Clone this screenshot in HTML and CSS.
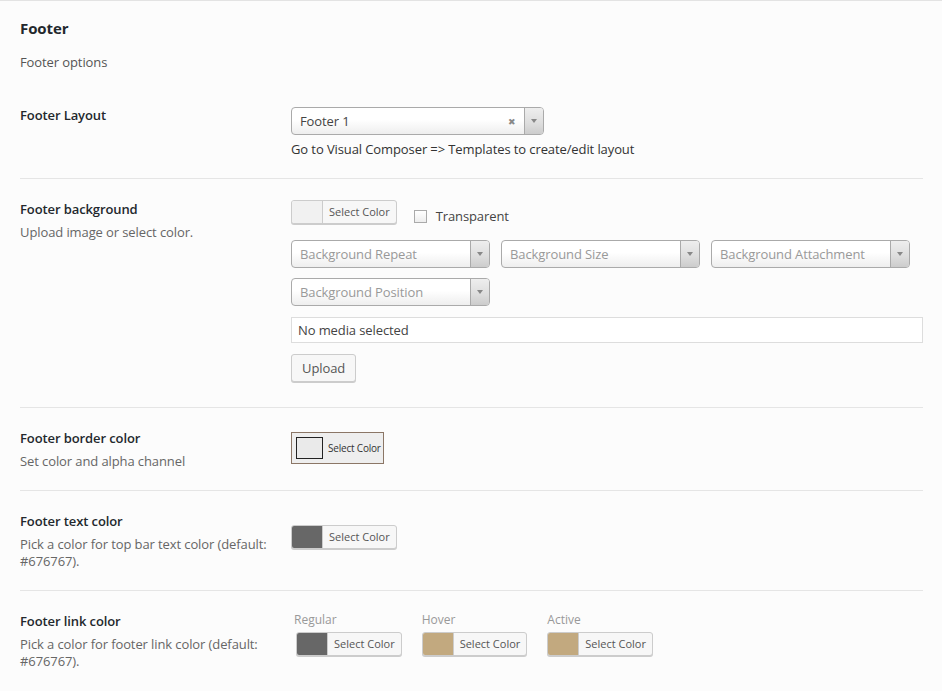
FILE: index.html
```html
<!DOCTYPE html>
<html>
<head>
<meta charset="utf-8">
<link rel="stylesheet" href="styles.css">
</head>
<body>
<div class="page">
  <div class="section-head">
    <h2 class="title">Footer</h2>
    <p class="subtitle">Footer options</p>
  </div>

  <div class="row">
    <div class="label-col">
      <div class="label">Footer Layout</div>
    </div>
    <div class="field-col field-layout">
      <div class="select select-main">
        <span class="select-text">Footer 1</span>
        <span class="select-clear">&#x2716;</span>
        <span class="select-arrow"><span class="tri"></span></span>
      </div>
      <div class="hint">Go to Visual Composer =&gt; Templates to create/edit layout</div>
    </div>
  </div>

  <div class="row">
    <div class="label-col">
      <div class="label">Footer background</div>
      <div class="desc">Upload image or select color.</div>
    </div>
    <div class="field-col field-bg">
      <div class="line-color">
        <div class="color-btn"><span class="swatch sw-light"></span><span class="color-text">Select Color</span></div>
        <label class="check"><span class="box"></span><span>Transparent</span></label>
      </div>
      <div class="selects">
        <div class="select select-ph"><span class="select-text">Background Repeat</span><span class="select-arrow"><span class="tri"></span></span></div>
        <div class="select select-ph"><span class="select-text">Background Size</span><span class="select-arrow"><span class="tri"></span></span></div>
        <div class="select select-ph"><span class="select-text">Background Attachment</span><span class="select-arrow"><span class="tri"></span></span></div>
        <div class="select select-ph"><span class="select-text">Background Position</span><span class="select-arrow"><span class="tri"></span></span></div>
      </div>
      <div class="media-input">No media selected</div>
      <div class="upload-btn">Upload</div>
    </div>
  </div>

  <div class="row">
    <div class="label-col">
      <div class="label">Footer border color</div>
      <div class="desc">Set color and alpha channel</div>
    </div>
    <div class="field-col field-border">
      <div class="alpha-btn"><span class="alpha-swatch"></span><span class="alpha-text">Select Color</span></div>
    </div>
  </div>

  <div class="row">
    <div class="label-col">
      <div class="label">Footer text color</div>
      <div class="desc">Pick a color for top bar text color (default: #676767).</div>
    </div>
    <div class="field-col field-text">
      <div class="color-btn"><span class="swatch sw-dark"></span><span class="color-text">Select Color</span></div>
    </div>
  </div>

  <div class="row row-last">
    <div class="label-col">
      <div class="label">Footer link color</div>
      <div class="desc">Pick a color for footer link color (default: #676767).</div>
    </div>
    <div class="field-col field-link">
      <div class="link-item">
        <div class="mini-label">Regular</div>
        <div class="color-btn"><span class="swatch sw-dark"></span><span class="color-text">Select Color</span></div>
      </div>
      <div class="link-item">
        <div class="mini-label">Hover</div>
        <div class="color-btn"><span class="swatch sw-tan"></span><span class="color-text">Select Color</span></div>
      </div>
      <div class="link-item">
        <div class="mini-label">Active</div>
        <div class="color-btn"><span class="swatch sw-tan"></span><span class="color-text">Select Color</span></div>
      </div>
    </div>
  </div>
</div>
</body>
</html>
```
FILE: styles.css
```css
* { box-sizing: border-box; }
html, body { margin: 0; padding: 0; }
body {
  background: #fcfcfc;
  font-family: "Open Sans", "Noto Sans", sans-serif;
  font-size: 13px;
  color: #444;
  width: 942px;
  height: 691px;
  overflow: hidden;
  border-top: 1px solid #e3e3e3;
}
.page {
  padding: 0 19px 0 20px;
}
.section-head {
  padding-top: 17px;
  height: 84px;
}
.title {
  margin: 0;
  font-size: 15px;
  font-weight: 700;
  line-height: 20px;
  color: #23282d;
  letter-spacing: -0.1px;
}
.subtitle {
  margin: 16px 0 0;
  font-size: 13px;
  line-height: 17px;
  color: #555;
  letter-spacing: -0.1px;
}
.row {
  display: grid;
  grid-template-columns: 271px 1fr;
  padding: 20px 0;
  border-bottom: 1px solid #e5e5e5;
}
.row-last { border-bottom: none; }
.label {
  font-size: 13px;
  font-weight: 600;
  line-height: 21px;
  color: #23282d;
  letter-spacing: -0.1px;
}
.desc {
  margin-top: 4px;
  font-size: 13px;
  line-height: 17px;
  color: #666;
  padding-right: 4px;
  letter-spacing: -0.1px;
}
.field-col { min-width: 0; }

/* select2-like */
.select {
  position: relative;
  display: flex;
  align-items: center;
  height: 28px;
  border: 1px solid #aaa;
  border-radius: 4px;
  background: linear-gradient(to bottom, #ffffff 0%, #ffffff 45%, #eeeeee 100%);
  overflow: hidden;
}
.select-main { width: 253px; margin-top: 2px; }
.select-text {
  flex: 1;
  padding-left: 8px;
  font-size: 13px;
  color: #444;
  white-space: nowrap;
  letter-spacing: -0.1px;
}
.select-ph .select-text { color: #999; }
.select-clear {
  width: 14px;
  font-size: 9px;
  color: #888;
  margin-right: 5px;
  text-align: center;
}
.select-arrow {
  width: 19px;
  height: 100%;
  border-left: 1px solid #aaa;
  background: linear-gradient(to bottom, #eeeeee 0%, #dddddd 60%, #cccccc 100%);
  display: flex;
  align-items: center;
  justify-content: center;
}
.tri {
  width: 0;
  height: 0;
  border-left: 3px solid transparent;
  border-right: 3px solid transparent;
  border-top: 4px solid #888;
}
.hint {
  margin-top: 6px;
  font-size: 13px;
  line-height: 17px;
  color: #333;
  letter-spacing: -0.1px;
}

/* background field */
.field-bg { padding-top: 1px; }
.line-color {
  display: flex;
  align-items: flex-start;
  gap: 17px;
  height: 24px;
}
.selects {
  display: grid;
  grid-template-columns: repeat(3, 199px);
  column-gap: 11px;
  row-gap: 10px;
  margin-top: 16px;
}
.media-input {
  margin-top: 11px;
  height: 26px;
  border: 1px solid #ddd;
  background: #fff;
  padding: 0 6px;
  font-size: 13px;
  line-height: 24px;
  color: #444;
  letter-spacing: -0.1px;
}
.upload-btn {
  display: inline-block;
  margin-top: 11px;
  margin-bottom: 5px;
  height: 28px;
  padding: 0 10px;
  border: 1px solid #ccc;
  border-radius: 3px;
  background: #f7f7f7;
  box-shadow: 0 1px 0 #ccc;
  font-size: 13px;
  line-height: 26px;
  color: #555;
  letter-spacing: -0.1px;
}

/* wp color button */
.color-btn {
  display: inline-flex;
  height: 24px;
  border: 1px solid #ccc;
  border-radius: 3px;
  background: #f7f7f7;
  box-shadow: 0 1px 0 #ccc;
  overflow: hidden;
}
.swatch {
  width: 31px;
  height: 100%;
  border-right: 1px solid #ccc;
}
.sw-light { background: #f1f1f1; }
.sw-dark { background: #676767; }
.sw-tan { background: #c2a97f; }
.color-text {
  padding: 0 6px;
  font-size: 11px;
  line-height: 22px;
  color: #555;
}
.check {
  display: flex;
  align-items: center;
  gap: 9px;
  font-size: 13px;
  line-height: 17px;
  color: #444;
  margin-top: 8px;
  letter-spacing: -0.1px;
}
.box {
  width: 13px;
  height: 13px;
  border: 1px solid #aaa;
  background: linear-gradient(to bottom, #fff, #ededed);
}

/* alpha color */
.field-border { padding-top: 4px; }
.alpha-btn {
  display: inline-flex;
  align-items: center;
  width: 93px;
  height: 32px;
  border: 1px solid #8b7666;
  background: #eeeeee;
  padding-left: 4px;
}
.alpha-swatch {
  width: 27px;
  height: 22px;
  border: 1px solid #222;
  background: #eaeaea;
}
.alpha-text {
  margin-left: 5px;
  font-size: 10px;
  color: #333;
  letter-spacing: -0.2px;
}

.field-text { padding-top: 14px; }

/* link colors */
.field-link {
  display: flex;
  gap: 20px;
  padding-top: 1px;
}
.mini-label {
  font-size: 12px;
  line-height: 16px;
  color: #999;
  padding-left: 3px;
}
.link-item .color-btn { margin-top: 4px; margin-left: 5px; }
.link-item + .link-item .color-btn { margin-left: 0; }
.link-item + .link-item .mini-label { padding-left: 0; }
```
